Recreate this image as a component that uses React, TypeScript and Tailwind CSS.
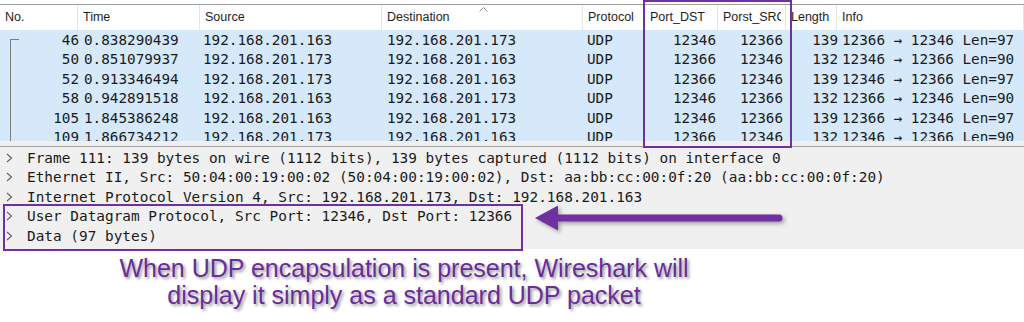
import React from 'react';

const HEADERS = [
  { label: 'No.', w: 'w-[78px]' },
  { label: 'Time', w: 'w-[122px]' },
  { label: 'Source', w: 'w-[182px]' },
  { label: 'Destination', w: 'w-[201px]', sorted: true },
  { label: 'Protocol', w: 'w-[62px]' },
  { label: 'Port_DST', w: 'w-[73px]' },
  { label: 'Porst_SRC', w: 'w-[68px]' },
  { label: 'Length', w: 'w-[51px]' },
  { label: 'Info', w: 'flex-1' },
];

const PACKETS = [
  ['46', '0.838290439', '192.168.201.163', '192.168.201.173', 'UDP', '12346', '12366', '139', '12366 → 12346 Len=97'],
  ['50', '0.851079937', '192.168.201.173', '192.168.201.163', 'UDP', '12366', '12346', '132', '12346 → 12366 Len=90'],
  ['52', '0.913346494', '192.168.201.173', '192.168.201.163', 'UDP', '12366', '12346', '139', '12346 → 12366 Len=97'],
  ['58', '0.942891518', '192.168.201.163', '192.168.201.173', 'UDP', '12346', '12366', '132', '12366 → 12346 Len=90'],
  ['105', '1.845386248', '192.168.201.163', '192.168.201.173', 'UDP', '12346', '12366', '139', '12366 → 12346 Len=97'],
  ['109', '1.866734212', '192.168.201.173', '192.168.201.163', 'UDP', '12366', '12346', '132', '12346 → 12366 Len=90'],
];

const DETAILS = [
  'Frame 111: 139 bytes on wire (1112 bits), 139 bytes captured (1112 bits) on interface 0',
  'Ethernet II, Src: 50:04:00:19:00:02 (50:04:00:19:00:02), Dst: aa:bb:cc:00:0f:20 (aa:bb:cc:00:0f:20)',
  'Internet Protocol Version 4, Src: 192.168.201.173, Dst: 192.168.201.163',
  'User Datagram Protocol, Src Port: 12346, Dst Port: 12366',
  'Data (97 bytes)',
];

function Chevron() {
  return (
    <svg width="8" height="10" viewBox="0 0 8 10" className="shrink-0">
      <path d="M2 1 L6.5 5 L2 9" fill="none" stroke="#5f5f5f" strokeWidth="1.1" />
    </svg>
  );
}

export default function App() {
  return (
    <div className="relative w-[1024px] h-[322px] overflow-hidden bg-white text-[#1a1a1a]">
      {/* packet list */}
      <div className="h-[4px]" />
      <div className="border-t border-[#a0a0a0]">
        <div className="flex h-[25px] bg-white font-['Liberation_Sans',Arial,sans-serif] text-[12.5px] text-[#1e1e1e]">
          {HEADERS.map((h) => (
            <div
              key={h.label}
              className={`${h.w} relative shrink-0 flex items-center pl-[5px] pr-[4px] border-r border-[#e5e5e5] whitespace-nowrap`}
            >
              <span className="block overflow-hidden">{h.label}</span>
              {h.sorted && (
                <svg width="9" height="5" viewBox="0 0 9 5" className="absolute left-[97px] top-[2px]">
                  <path d="M0.5 4.5 L4.5 0.5 L8.5 4.5" fill="none" stroke="#8c8c8c" strokeWidth="1" />
                </svg>
              )}
            </div>
          ))}
        </div>
        <div className="relative h-[111px] overflow-hidden bg-[#d5e9fb] pt-[0.5px] font-['DejaVu_Sans_Mono',monospace] text-[14.3px]">
          <div className="absolute left-[10px] top-[9px] w-[9px] h-[110px] border-l border-t border-[#7d7d7d]" />
          {PACKETS.map((p) => (
            <div key={p[0]} className="flex h-[19.4px] items-center whitespace-nowrap leading-none">
              <div className="w-[79px] shrink-0 text-right">{p[0]}</div>
              <div className="w-[124px] shrink-0 pl-[5px]">{p[1]}</div>
              <div className="w-[184px] shrink-0">{p[2]}</div>
              <div className="w-[200px] shrink-0">{p[3]}</div>
              <div className="w-[60px] shrink-0">{p[4]}</div>
              <div className="w-[69px] shrink-0 text-right">{p[5]}</div>
              <div className="w-[67px] shrink-0 text-right">{p[6]}</div>
              <div className="w-[55px] shrink-0 text-right">{p[7]}</div>
              <div className="pl-[4px]">{p[8]}</div>
            </div>
          ))}
        </div>
      </div>

      {/* splitter */}
      <div className="h-[5px] bg-[#f0f0f0]" />

      {/* packet details */}
      <div className="h-[103px] border-t border-[#a0a0a0] bg-[#f0f0f0] pt-[1px] font-['DejaVu_Sans_Mono',monospace] text-[14.4px]">
        {DETAILS.map((d) => (
          <div key={d} className="flex h-[19.5px] items-center gap-[14px] pl-[5px] whitespace-nowrap leading-none">
            <Chevron />
            <span>{d}</span>
          </div>
        ))}
      </div>

      {/* caption */}
      <div className="mt-[6px] w-[808px] text-center font-['Liberation_Sans',Arial,sans-serif] text-[25px] leading-[27px] text-[#6a2c9c] [text-shadow:2px_2px_3px_rgba(0,0,0,0.4)]">
        <div>When UDP encapsulation is present, Wireshark will</div>
        <div>display it simply as a standard UDP packet</div>
      </div>

      {/* annotations */}
      <div className="absolute left-[643px] top-0 w-[149px] h-[148px] border-2 border-[#7030a0]" />
      <div className="absolute left-[3px] top-[204px] w-[520px] h-[47px] border-2 border-[#7030a0]" />
      <svg
        width="262"
        height="34"
        viewBox="0 0 262 34"
        className="absolute left-[530px] top-[202px] [filter:drop-shadow(2px_2px_2px_rgba(0,0,0,0.35))]"
      >
        <path d="M5 16 L28 3.5 L28 28.5 Z" fill="#7030a0" />
        <line x1="26" y1="16" x2="249" y2="16" stroke="#7030a0" strokeWidth="7" strokeLinecap="round" />
      </svg>
    </div>
  );
}
